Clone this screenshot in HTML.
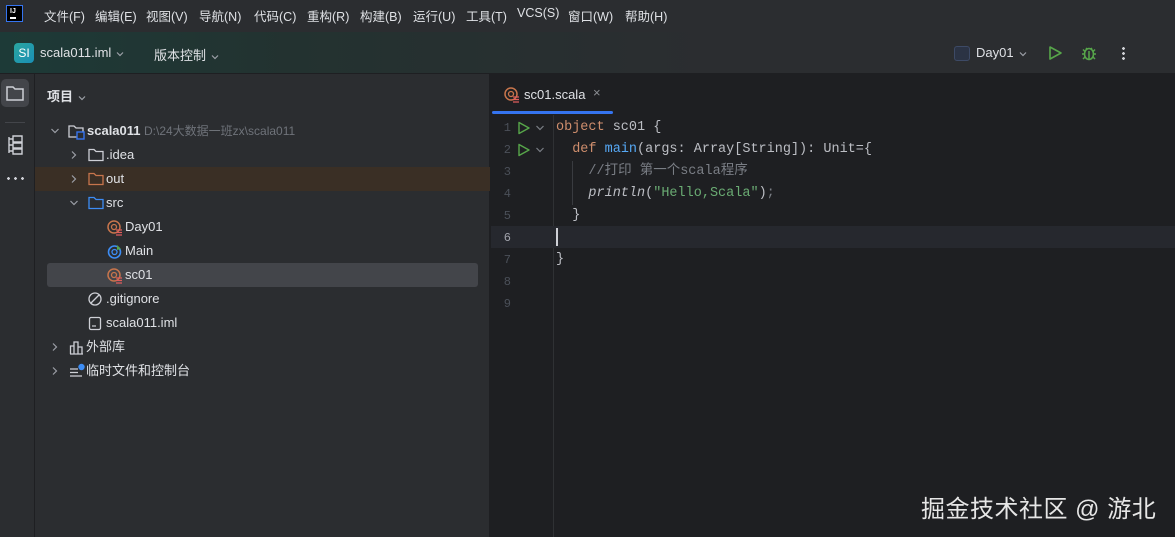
<!DOCTYPE html>
<html><head><meta charset="utf-8"><style>
*{margin:0;padding:0;box-sizing:border-box}
body{width:1175px;height:537px;overflow:hidden;background:#1e1f22;font-family:"Liberation Sans","Noto Sans CJK SC",sans-serif;color:#dfe1e5;font-size:13px;position:relative}
.abs{position:absolute}
#menu{left:0;top:0;width:1175px;height:32px;background:#2b2d30}
#menu span{position:absolute;top:6px;font-size:12.5px;color:#dfe1e5}
#tool{left:0;top:32px;width:1175px;height:42px;background:linear-gradient(90deg,#1d3a37 0%,#233230 25%,#2b2d30 60%);border-bottom:1px solid #1e1f22}
#strip{left:0;top:74px;width:35px;height:463px;background:#2b2d30;border-right:1px solid #1e1f22}
#proj{left:35px;top:74px;width:455px;height:463px;background:#2b2d30;border-right:1px solid #1e1f22}
.row{position:absolute;left:0;height:24px;width:455px;font-size:13px;line-height:24px}
.chev{position:absolute;top:7px}
#ed{left:491px;top:74px;width:684px;height:463px;background:#1e1f22}
.code{position:absolute;left:65px;font-family:"Liberation Mono","Noto Sans CJK SC",monospace;font-size:13.5px;color:#bcbec4;white-space:pre;line-height:22px}
.ln{position:absolute;left:8px;width:12px;text-align:right;font-family:"Liberation Mono",monospace;font-size:12px;color:#4b5059;line-height:22px}
.kw{color:#cf8e6d}.fn{color:#56a8f5}.str{color:#6aab73}.cm{color:#7a7e85}
.dd{display:inline-block;vertical-align:middle;margin-left:4px}
</style></head><body>
<div id="menu" class="abs">
<div class="abs" style="left:6px;top:5px;width:17px;height:17px;background:#000;border:1px solid #3574f0"><div class="abs" style="left:3px;top:2px;font-size:7px;color:#fff;font-weight:bold">IJ</div><div class="abs" style="left:3px;top:11px;width:6px;height:1.5px;background:#fff"></div></div>
<span style="left:44px">文件(F)</span><span style="left:95px">编辑(E)</span><span style="left:146px">视图(V)</span><span style="left:199px">导航(N)</span><span style="left:254px">代码(C)</span><span style="left:307px">重构(R)</span><span style="left:360px">构建(B)</span><span style="left:413px">运行(U)</span><span style="left:466px">工具(T)</span><span style="left:517px;top:6px">VCS(S)</span><span style="left:568px">窗口(W)</span><span style="left:625px">帮助(H)</span>
</div>
<div id="tool" class="abs">
<div class="abs" style="left:14px;top:11px;width:20px;height:20px;border-radius:4px;background:linear-gradient(135deg,#2aa6a0,#1a8fb5);color:#fff;font-size:12px;line-height:20px;text-align:center">SI</div>
<div class="abs" style="left:40px;top:13px;font-size:13px">scala011.iml<svg class="dd" width="10" height="10"><path d="M2 3.5l3 3 3-3" fill="none" stroke="#9da0a8" stroke-width="1.2"/></svg></div>
<div class="abs" style="left:154px;top:13px;font-size:13px">版本控制<svg class="dd" width="10" height="10"><path d="M2 3.5l3 3 3-3" fill="none" stroke="#9da0a8" stroke-width="1.2"/></svg></div>
<div class="abs" style="left:954px;top:14px;width:16px;height:15px;border:1.5px solid #3d4a66;border-radius:3px;background:#2b3344"></div>
<div class="abs" style="left:976px;top:13px;font-size:13px">Day01<svg class="dd" width="10" height="10"><path d="M2 3.5l3 3 3-3" fill="none" stroke="#9da0a8" stroke-width="1.2"/></svg></div>
<svg class="abs" style="left:1047px;top:13px" width="16" height="16"><path d="M3 2 L14 8 L3 14 Z" fill="none" stroke="#57a64a" stroke-width="1.6" stroke-linejoin="round"/></svg>
<svg class="abs" style="left:1080px;top:12px" width="18" height="18"><ellipse cx="9" cy="10" rx="4.5" ry="5.5" fill="none" stroke="#57a64a" stroke-width="1.6"/><path d="M6 4 L7.5 5.5 M12 4 L10.5 5.5 M2 10h2.5 M13.5 10H16 M3 5.5l2 2 M15 5.5l-2 2 M3 15l2-2 M15 15l-2-2 M9 7v8" stroke="#57a64a" stroke-width="1.5"/></svg>
<div class="abs" style="left:1122px;top:14px;width:3px;height:14px;background:radial-gradient(circle,#cfd1d5 1.3px,transparent 1.5px) 0 0/3px 5px"></div>
</div>
<div id="strip" class="abs">
<div class="abs" style="left:1px;top:5px;width:28px;height:28px;border-radius:5px;background:#43454a"></div>
<svg class="abs" style="left:5px;top:10px" width="20" height="18"><path d="M2 3h6l2 2h8v11H2z" fill="none" stroke="#ced0d6" stroke-width="1.5"/></svg>
<div class="abs" style="left:5px;top:48px;width:20px;height:1px;background:#43454a"></div>
<svg class="abs" style="left:6px;top:61px" width="18" height="20"><path d="M3 2v16 M3 4h4 M3 10h4 M3 16h4 M7 1h9v6H7z M7 8h9v5H7z M7 14h9v5H7z" fill="none" stroke="#ced0d6" stroke-width="1.4"/></svg>
<div class="abs" style="left:5px;top:103px;width:20px;height:3px;background:radial-gradient(circle,#ced0d6 1.3px,transparent 1.5px) 0 0/7px 3px"></div>
</div>
<div id="proj" class="abs">
<div class="abs" style="left:12px;top:12px;font-size:13px;font-weight:bold">项目<svg class="dd" width="10" height="10"><path d="M2 3.5l3 3 3-3" fill="none" stroke="#9da0a8" stroke-width="1.2"/></svg></div>
<div class="row" style="top:45px"><svg class="chev" style="left:15px" width="10" height="10"><path d="M1.5 3l3.5 3.5 3.5-3.5" fill="none" stroke="#9da0a8" stroke-width="1.2"/></svg>
<svg class="abs" style="left:33px;top:5px" width="18" height="16"><path d="M1 2h5l2 2h7v9H1z" fill="none" stroke="#ced0d6" stroke-width="1.3"/><rect x="9" y="8" width="7" height="7" fill="#2b2d30" stroke="#3574f0" stroke-width="1.4"/></svg>
<span class="abs" style="left:52px;font-weight:bold">scala011</span><span class="abs" style="left:109px;color:#6f737a;font-size:12px">D:\24大数据一班zx\scala011</span></div>
<div class="row" style="top:69px"><svg class="chev" style="left:34px" width="10" height="10"><path d="M3 1.5l3.5 3.5-3.5 3.5" fill="none" stroke="#9da0a8" stroke-width="1.2"/></svg><svg class="abs" style="left:53px;top:5px" width="16" height="14"><path d="M1 1.5h5l2 2h7v9H1z" fill="none" stroke="#ced0d6" stroke-width="1.3"/></svg><span class="abs" style="left:71px">.idea</span></div>
<div class="row" style="top:93px;background:#3a2f25"><svg class="chev" style="left:34px" width="10" height="10"><path d="M3 1.5l3.5 3.5-3.5 3.5" fill="none" stroke="#9da0a8" stroke-width="1.2"/></svg><svg class="abs" style="left:53px;top:5px" width="16" height="14"><path d="M1 1.5h5l2 2h7v9H1z" fill="none" stroke="#c7754c" stroke-width="1.3"/></svg><span class="abs" style="left:71px">out</span></div>
<div class="row" style="top:117px"><svg class="chev" style="left:34px" width="10" height="10"><path d="M1.5 3l3.5 3.5 3.5-3.5" fill="none" stroke="#9da0a8" stroke-width="1.2"/></svg><svg class="abs" style="left:53px;top:5px" width="16" height="14"><path d="M1 1.5h5l2 2h7v9H1z" fill="none" stroke="#3d8df5" stroke-width="1.3"/></svg><span class="abs" style="left:71px">src</span></div>
<div class="row" style="top:141px"><svg class="abs" style="left:72px;top:5px" width="16" height="16"><circle cx="7" cy="7" r="6" fill="none" stroke="#c7754c" stroke-width="1.5"/><circle cx="7" cy="7" r="2.5" fill="none" stroke="#c7754c" stroke-width="1.3"/><path d="M9 10h6M9 12.5h6M9 15h6" stroke="#e05c5c" stroke-width="1.2"/></svg><span class="abs" style="left:90px">Day01</span></div>
<div class="row" style="top:165px"><svg class="abs" style="left:72px;top:5px" width="16" height="16"><circle cx="7.5" cy="8" r="6" fill="none" stroke="#3d8df5" stroke-width="1.6"/><circle cx="7.5" cy="8" r="2.5" fill="none" stroke="#3d8df5" stroke-width="1.3"/><path d="M10 1l4 4-4 1z" fill="#57a64a"/></svg><span class="abs" style="left:90px">Main</span></div>
<div class="abs" style="left:12px;top:189px;width:431px;height:24px;background:#43454a;border-radius:3px"></div>
<div class="row" style="top:189px"><svg class="abs" style="left:72px;top:5px" width="16" height="16"><circle cx="7" cy="7" r="6" fill="none" stroke="#c7754c" stroke-width="1.5"/><circle cx="7" cy="7" r="2.5" fill="none" stroke="#c7754c" stroke-width="1.3"/><path d="M9 10h6M9 12.5h6M9 15h6" stroke="#e05c5c" stroke-width="1.2"/></svg><span class="abs" style="left:90px">sc01</span></div>
<div class="row" style="top:213px"><svg class="abs" style="left:53px;top:5px" width="16" height="16"><circle cx="7" cy="7" r="6" fill="none" stroke="#ced0d6" stroke-width="1.3"/><path d="M3 11L11 3" stroke="#ced0d6" stroke-width="1.3"/></svg><span class="abs" style="left:71px">.gitignore</span></div>
<div class="row" style="top:237px"><svg class="abs" style="left:53px;top:5px" width="16" height="16"><rect x="1.5" y="1.5" width="11" height="12" rx="1.5" fill="none" stroke="#ced0d6" stroke-width="1.3"/><path d="M4 10h4" stroke="#ced0d6" stroke-width="1.2"/></svg><span class="abs" style="left:71px">scala011.iml</span></div>
<div class="row" style="top:261px"><svg class="chev" style="left:15px" width="10" height="10"><path d="M3 1.5l3.5 3.5-3.5 3.5" fill="none" stroke="#9da0a8" stroke-width="1.2"/></svg><svg class="abs" style="left:34px;top:5px" width="16" height="16"><path d="M1.5 14V6h3.5v8 M5 14V2h4v12 M9 14V7h4v7 M1 14h13" fill="none" stroke="#ced0d6" stroke-width="1.3"/></svg><span class="abs" style="left:51px">外部库</span></div>
<div class="row" style="top:285px"><svg class="chev" style="left:15px" width="10" height="10"><path d="M3 1.5l3.5 3.5-3.5 3.5" fill="none" stroke="#9da0a8" stroke-width="1.2"/></svg><svg class="abs" style="left:34px;top:4px" width="16" height="16"><path d="M1 6h8M1 9.5h8M1 13h12" stroke="#ced0d6" stroke-width="1.3"/><circle cx="12.5" cy="4" r="3.2" fill="#3d8df5"/></svg><span class="abs" style="left:51px">临时文件和控制台</span></div>
</div>
<div id="ed" class="abs">
<svg class="abs" style="left:13px;top:13px" width="16" height="16"><circle cx="7" cy="7" r="6" fill="none" stroke="#c7754c" stroke-width="1.5"/><circle cx="7" cy="7" r="2.5" fill="none" stroke="#c7754c" stroke-width="1.3"/><path d="M9 10h6M9 12.5h6M9 15h6" stroke="#e05c5c" stroke-width="1.2"/></svg>
<div class="abs" style="left:33px;top:13px;font-size:13px">sc01.scala</div>
<div class="abs" style="left:102px;top:11px;color:#8c8f94;font-size:13px">×</div>
<div class="abs" style="left:1px;top:37px;width:121px;height:3px;background:#3574f0;border-radius:2px"></div>
<div class="abs" style="left:62px;top:41px;width:1px;height:422px;background:#2f3134"></div>
<div class="abs" style="left:0;top:152px;width:684px;height:22px;background:#26282e"></div>
<div class="abs" style="left:81px;top:87px;width:1px;height:44px;background:#393b40"></div>
<div class="ln" style="top:43px">1</div><div class="ln" style="top:65px">2</div><div class="ln" style="top:87px">3</div><div class="ln" style="top:109px">4</div><div class="ln" style="top:131px">5</div><div class="ln" style="top:153px;color:#a1a3ab">6</div><div class="ln" style="top:175px">7</div><div class="ln" style="top:197px">8</div><div class="ln" style="top:219px">9</div>
<svg class="abs" style="left:26px;top:47px" width="14" height="14"><path d="M2 1.5L12 7 2 12.5z" fill="none" stroke="#57a64a" stroke-width="1.4" stroke-linejoin="round"/></svg>
<svg class="abs" style="left:26px;top:69px" width="14" height="14"><path d="M2 1.5L12 7 2 12.5z" fill="none" stroke="#57a64a" stroke-width="1.4" stroke-linejoin="round"/></svg>
<svg class="abs" style="left:44px;top:49px" width="10" height="10"><path d="M1.5 3l3.5 3.5 3.5-3.5" fill="none" stroke="#7a7e85" stroke-width="1.2"/></svg>
<svg class="abs" style="left:44px;top:71px" width="10" height="10"><path d="M1.5 3l3.5 3.5 3.5-3.5" fill="none" stroke="#7a7e85" stroke-width="1.2"/></svg>
<div class="code" style="top:43px"><span class="kw">object</span> sc01 {</div>
<div class="code" style="top:65px">  <span class="kw">def</span> <span class="fn">main</span>(args: Array[String]): Unit={</div>
<div class="code" style="top:87px">    <span class="cm">//打印 第一个scala程序</span></div>
<div class="code" style="top:109px">    <i>println</i>(<span class="str">"Hello,Scala"</span>)<span class="cm">;</span></div>
<div class="code" style="top:131px">  }</div>
<div class="abs" style="left:65px;top:154px;width:2px;height:18px;background:#ced0d6"></div>
<div class="code" style="top:175px">}</div>
<div class="abs" style="left:430px;top:415px;font-size:24px;color:#e6e6e6;letter-spacing:0.5px">掘金技术社区 @ 游北</div>
</div>
</body></html>
